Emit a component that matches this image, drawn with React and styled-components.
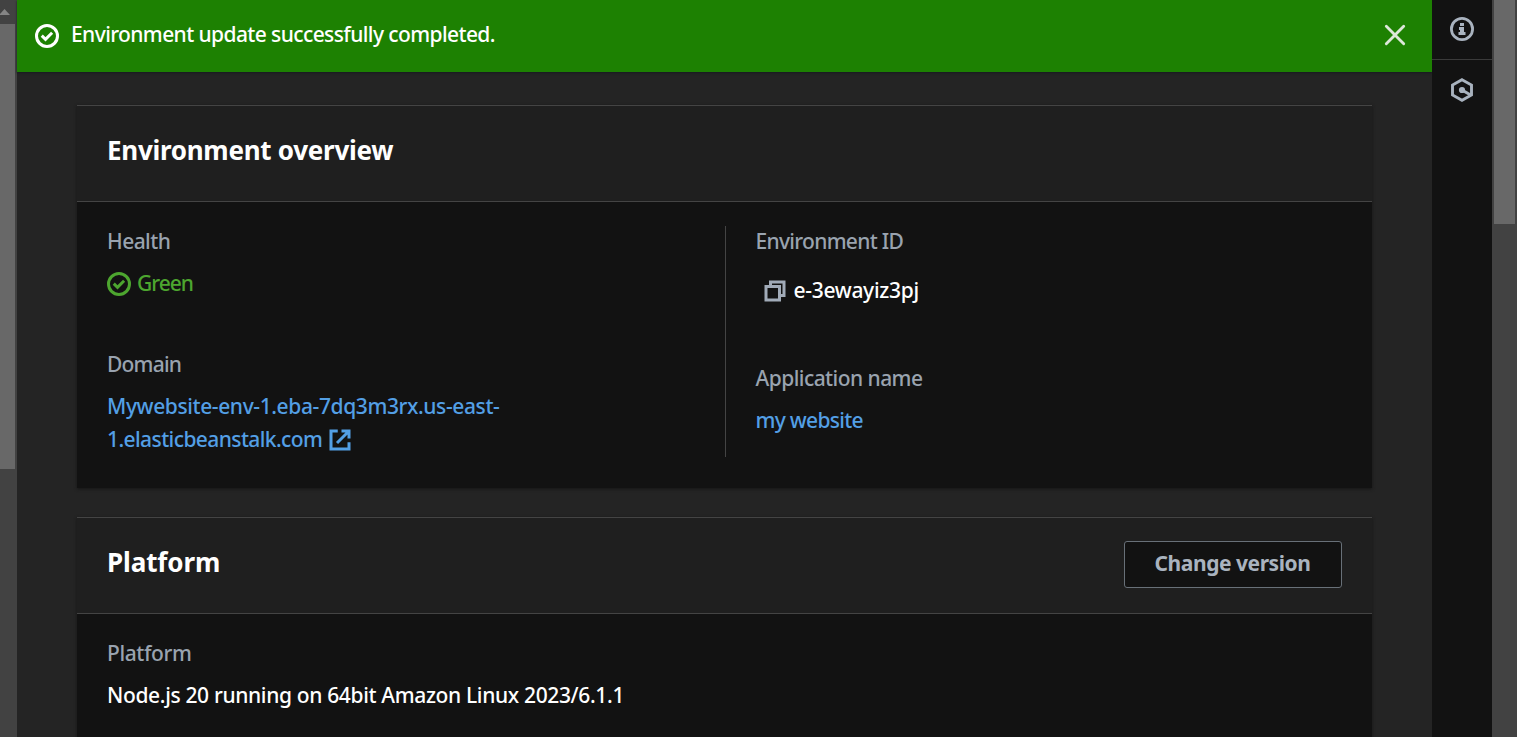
import React from "react";
import styled, { createGlobalStyle } from "styled-components";

const GlobalStyle = createGlobalStyle`
  * { box-sizing: border-box; }
  body {
    margin: 0;
    overflow: hidden;
    background: #242424;
    font-family: "Noto Sans", "Open Sans", sans-serif;
    font-size: 21px;
    font-weight: 500;
    line-height: 33px;
    color: #fff;
  }
`;

const Page = styled.div`
  display: flex;
  height: 737px;
  width: 1517px;
  overflow: hidden;
`;

const Scrollbar = styled.div`
  flex: none;
  width: ${(p) => p.$width}px;
  padding: 0 2px 0 ${(p) => p.$inset}px;
  background: #424242;
`;

const ScrollArrow = styled.svg`
  display: block;
  width: 15px;
  height: 24px;
`;

const Thumb = styled.div`
  height: ${(p) => p.$length}px;
  background: #686868;
`;

const Main = styled.main`
  flex: 1;
  min-width: 0;
  background: #242424;
`;

const Flash = styled.div`
  display: flex;
  align-items: center;
  height: 72px;
  padding: 0 25px 0 18px;
  background: #1d8102;
  box-shadow: 0 1px 2px #16191f;
`;

const FlashText = styled.div`
  flex: 1;
  margin: -3px 0 0 12px;
`;

const Icon = styled.svg`
  flex: none;
  display: block;
  width: 24px;
  height: 24px;
  fill: none;
  stroke: currentColor;
  stroke-width: 2;
`;

const Text = styled.span`
  letter-spacing: ${(p) => p.$spacing || 0}px;
  white-space: nowrap;
`;

const CloseButton = styled.button`
  display: flex;
  padding: 0;
  border: 0;
  margin-top: -2px;
  background: none;
  color: #dde8da;
`;

const Content = styled.div`
  display: flex;
  flex-direction: column;
  gap: 29px;
  padding: 33px 60px 0;
`;

const Card = styled.section`
  height: ${(p) => p.$height}px;
  background: #121212;
  border-top: 1px solid #444;
  box-shadow: 0 1px 3px #151515;
`;

const CardHeader = styled.header`
  display: flex;
  align-items: center;
  justify-content: space-between;
  height: 96px;
  padding: 0 30px;
  background: #1f1f1f;
  border-bottom: 1px solid #444;
`;

const Title = styled.h2`
  margin: -7px 0 0;
  font-size: 26px;
  line-height: 36px;
  font-weight: 700;
`;

const Button = styled.button`
  width: 218px;
  height: 47px;
  margin-top: -2px;
  padding: 0 1px 3px 0;
  border: 1px solid #687078;
  border-radius: 3px;
  background: #121212;
  color: #a9b3bf;
  font: 700 21px/30px "Noto Sans", "Open Sans", sans-serif;
`;

const Columns = styled.div`
  display: flex;
  padding: 24px 30px 0;
`;

const Column = styled.div`
  display: flex;
  flex-direction: column;
  gap: 48px;
  width: ${(p) => p.$width}px;
  height: 231px;
  padding-left: ${(p) => (p.$divided ? 29.5 : 0)}px;
  border-left: ${(p) => (p.$divided ? "1px solid #444" : "0")};
`;

const Field = styled.div`
  display: flex;
  flex-direction: column;
  gap: 9px;

  &:first-child { margin-top: -1px; }
`;

const Label = styled.div`
  color: #99a3af;
`;

const Status = styled.div`
  display: flex;
  align-items: center;
  gap: 6px;
  color: #4da62f;
`;

const Copyable = styled.div`
  display: flex;
  align-items: center;
  gap: 7px;
  height: 47px;
  padding-left: 7px;
  color: #fff;

  svg { color: #a1abb8; }
`;

const Link = styled.a`
  color: #539fe5;

  svg {
    display: inline-block;
    margin-left: 6px;
    vertical-align: -5px;
  }
`;

const Rail = styled.aside`
  flex: none;
  width: 60px;
  background: #121212;
  color: #a9b3bf;
`;

const RailItem = styled.div`
  display: flex;
  justify-content: center;
  height: 60px;
  padding-top: ${(p) => p.$top}px;
  border-bottom: ${(p) => (p.$last ? "0" : "1px solid #3a3a3a")};
`;

const CheckIcon = () => (
  <Icon viewBox="0 0 16 16">
    <circle cx="8" cy="8" r="7" />
    <path d="m4.5 7.8 2.5 2.4 4.4-4.4" />
  </Icon>
);

const CloseIcon = () => (
  <Icon viewBox="0 0 16 16">
    <path d="m2.2 2.2 11.6 11.6M13.8 2.2 2.2 13.8" strokeLinecap="round" strokeWidth="1.9" />
  </Icon>
);

const CopyIcon = () => (
  <Icon viewBox="0 0 24 24">
    <path strokeWidth="3" d="M3 7.5h13.5V21H3zM7.5 7.5V3H21v13.5h-4.5" />
  </Icon>
);

const ExternalIcon = () => (
  <Icon viewBox="0 0 16 16">
    <path d="M14 9.5V14H2V2h4.5M9 2h5v5M6 10l7.5-7.5" />
  </Icon>
);

const InfoIcon = () => (
  <Icon viewBox="0 0 24 24">
    <circle cx="12" cy="12" r="10.6" strokeWidth="2.8" />
    <path fill="currentColor" stroke="none" d="M10 6h4v3h-4zM9 10h5v5h1.5v3H8.5v-3H10v-2H9z" />
  </Icon>
);

const HexagonIcon = () => (
  <Icon viewBox="0 0 24 24">
    <path strokeWidth="2.9" d="M12 1.7 21.5 7v10L12 22.3 2.5 17V7z" />
    <circle cx="12" cy="12" r="3.1" fill="currentColor" stroke="none" />
    <path strokeWidth="3" d="m12 12 9 5.3" />
  </Icon>
);

export default function App() {
  return (
    <>
      <GlobalStyle />
      <Page>
        <Scrollbar $width={17} $inset={0}>
          <ScrollArrow viewBox="0 0 15 24">
            <path d="M-1 15 4.5 9 10 15z" fill="#858585" />
          </ScrollArrow>
          <Thumb $length={445} />
        </Scrollbar>
        <Main>
          <Flash>
            <CheckIcon />
            <FlashText>
              <Text $spacing={-0.6}>Environment update successfully completed.</Text>
            </FlashText>
            <CloseButton aria-label="Close">
              <CloseIcon />
            </CloseButton>
          </Flash>
          <Content>
            <Card $height={383}>
              <CardHeader>
                <Title>
                  <Text $spacing={-0.28}>Environment overview</Text>
                </Title>
              </CardHeader>
              <Columns>
                <Column $width={618}>
                  <Field>
                    <Label><Text $spacing={-0.55}>Health</Text></Label>
                    <Status>
                      <CheckIcon />
                      <Text $spacing={-1}>Green</Text>
                    </Status>
                  </Field>
                  <Field>
                    <Label><Text $spacing={-0.8}>Domain</Text></Label>
                    <Link>
                      <Text $spacing={-0.39}>Mywebsite-env-1.eba-7dq3m3rx.us-east-</Text>
                      <br />
                      <Text $spacing={-0.59}>1.elasticbeanstalk.com</Text>
                      <ExternalIcon />
                    </Link>
                  </Field>
                </Column>
                <Column $width={617} $divided>
                  <Field>
                    <Label><Text $spacing={-0.7}>Environment ID</Text></Label>
                    <Copyable>
                      <CopyIcon />
                      <Text $spacing={-0.3}>e-3ewayiz3pj</Text>
                    </Copyable>
                  </Field>
                  <Field>
                    <Label><Text $spacing={-0.55}>Application name</Text></Label>
                    <Link><Text $spacing={-0.7}>my website</Text></Link>
                  </Field>
                </Column>
              </Columns>
            </Card>
            <Card $height={383}>
              <CardHeader>
                <Title>
                  <Text $spacing={-0.1}>Platform</Text>
                </Title>
                <Button><Text $spacing={-0.45}>Change version</Text></Button>
              </CardHeader>
              <Columns>
                <Field>
                  <Label><Text $spacing={-0.4}>Platform</Text></Label>
                  <Text $spacing={-0.35}>Node.js 20 running on 64bit Amazon Linux 2023/6.1.1</Text>
                </Field>
              </Columns>
            </Card>
          </Content>
        </Main>
        <Rail>
          <RailItem $top={17}><InfoIcon /></RailItem>
          <RailItem $top={18} $last><HexagonIcon /></RailItem>
        </Rail>
        <Scrollbar $width={25} $inset={2}>
          <Thumb $length={224} />
        </Scrollbar>
      </Page>
    </>
  );
}
